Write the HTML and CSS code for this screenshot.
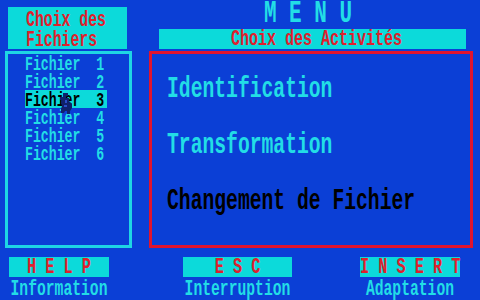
FILE: index.html
```html
<!DOCTYPE html>
<html lang="fr">

<head>
    <meta charset="UTF-8">
    <title>MENU</title>
    <link rel="stylesheet" href="styles.css">
</head>

<body>
    <div class="screen">
        <div class="top">
            <div class="left-col">
                <div class="files-title">
                    <span class="tall">Choix des</span>
                    <span class="tall">Fichiers</span>
                </div>
            </div>
            <div class="right-col">
                <div class="menu-title"><span class="tall">M E N U</span></div>
                <div class="act-title"><span class="tall">Choix des Activités</span></div>
            </div>
        </div>
        <div class="main">
            <div class="files">
                <div class="file"><span class="tall">Fichier  1</span></div>
                <div class="file"><span class="tall">Fichier  2</span></div>
                <div class="file sel"><span class="tall">Fichier  3</span></div>
                <div class="file"><span class="tall">Fichier  4</span></div>
                <div class="file"><span class="tall">Fichier  5</span></div>
                <div class="file"><span class="tall">Fichier  6</span></div>
            </div>
            <div class="acts">
                <div class="act"><span class="tall">Identification</span></div>
                <div class="act"><span class="tall">Transformation</span></div>
                <div class="act cur"><span class="tall">Changement de Fichier</span></div>
            </div>
        </div>
        <div class="keys">
            <div class="key help">
                <div class="key-bar"><span class="tall">H E L P</span></div>
                <div class="key-label"><span class="tall">Information</span></div>
            </div>
            <div class="key esc">
                <div class="key-bar"><span class="tall">E S C</span></div>
                <div class="key-label"><span class="tall">Interruption</span></div>
            </div>
            <div class="key insert">
                <div class="key-bar"><span class="tall">I N S E R T</span></div>
                <div class="key-label"><span class="tall">Adaptation</span></div>
            </div>
        </div>
        <!-- pointeur souris -->
        <svg class="pointer" width="14" height="26" viewBox="0 0 14 26">
            <path d="M4 3h5v3h-2v2h3v3l3 3v4l-2 3v3h-3v-3h-2l-1 2h-3v-4l1-3-1-3 1-3h-2v-3h3z" fill="#10206a"/>
            <path d="M6 10h2v3h-2zM5 15h3v2h-3z" fill="#2a4cc8"/>
        </svg>
    </div>
</body>

</html>
```

FILE: styles.css
```css
* {
    margin: 0;
    padding: 0;
    box-sizing: border-box
}

body {
    background: #0b3fd6;
    font-family: "Liberation Mono", "DejaVu Sans Mono", monospace;
    font-weight: bold;
    color: #22dde6
}

.screen {
    position: relative;
    width: 480px;
    height: 300px;
    overflow: hidden
}

/* texte etire en hauteur, facon ecran texte */
.tall {
    display: block;
    white-space: pre;
    transform: scaleY(1.5)
}

/* haut */
.top {
    display: flex;
    height: 51px
}

.left-col {
    margin-left: 5px;
    width: 127px
}

.files-title {
    display: flex;
    flex-direction: column;
    gap: 7px;
    margin: 7px 0 0 3px;
    width: 119px;
    height: 42px;
    padding: 7px 0 0 18px;
    background: #0cdada;
    color: #e0202c;
    font-size: 14.8px;
    line-height: 13px
}

.right-col {
    margin-left: 17px;
    width: 324px
}

.menu-title {
    height: 26px;
    padding: 5px 6px 0 0;
    line-height: 17px;
    text-align: center;
    font-size: 21px
}

.act-title {
    margin: 3px 7px 0 10px;
    height: 20px;
    padding: 3.5px 0 0 8px;
    line-height: 13px;
    text-align: center;
    font-size: 15px;
    background: #0cdada;
    color: #e0202c
}

/* milieu */
.main {
    display: flex;
    height: 197px
}

.files {
    margin-left: 5px;
    width: 127px;
    border: 3px solid #1ed6e4
}

.file {
    margin-left: 17px;
    width: 82px;
    height: 18px;
    padding-top: 5px;
    line-height: 12px;
    font-size: 13.2px
}

.file.sel {
    background: #0cdada;
    color: #000
}

.acts {
    margin-left: 17px;
    width: 324px;
    border: 3px solid #e0142e;
    padding: 7px 0 0 15px
}

.act {
    height: 56px;
    padding-top: 13px;
    line-height: 30px;
    font-size: 19.7px
}

.act.cur {
    color: #000
}

/* touches */
.keys {
    display: flex;
    margin-top: 9px
}

.key {
    text-align: center
}

.help {
    margin-left: 9px;
    width: 100px
}

.esc {
    margin-left: 74px;
    width: 109px
}

.insert {
    margin-left: 68px;
    width: 100px
}

.key-bar {
    height: 20px;
    padding-top: 3.5px;
    line-height: 13px;
    font-size: 15.2px;
    background: #0cdada;
    color: #e0202c
}

.key-label {
    padding-top: 5.5px;
    line-height: 13px;
    font-size: 14.7px
}

.pointer {
    position: absolute;
    left: 59px;
    top: 90px
}
```
